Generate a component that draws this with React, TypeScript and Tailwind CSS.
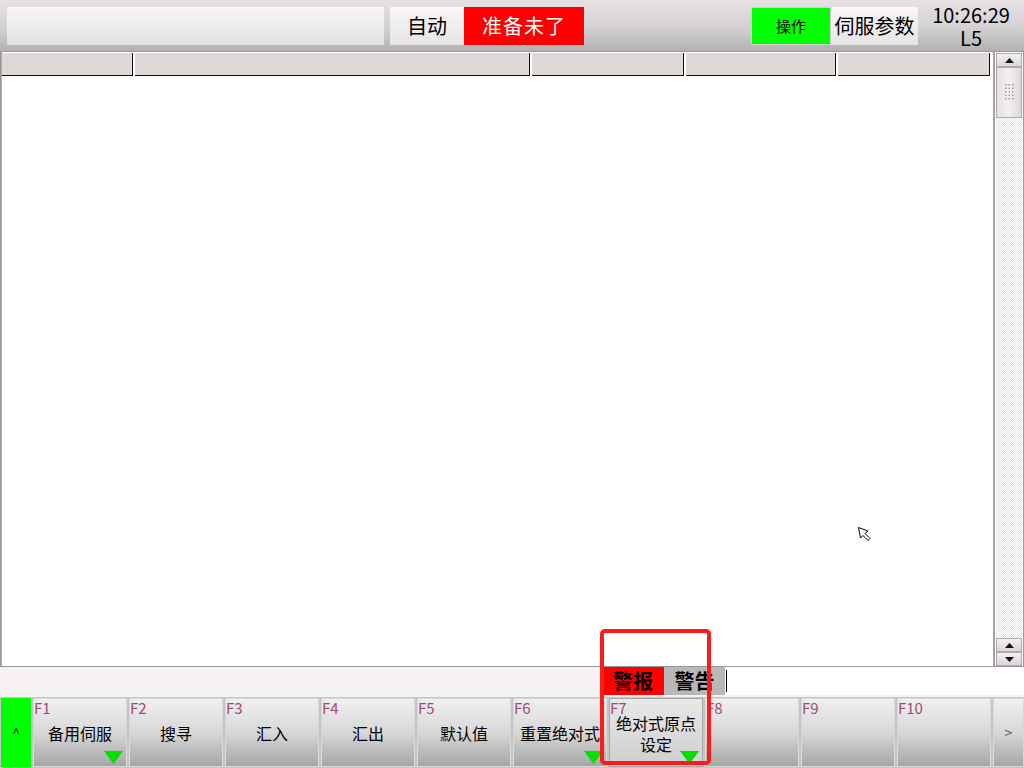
import React from "react";

const FONT = "font-['Noto_Sans_CJK_SC','Noto_Sans',sans-serif]";

type Key = { f: string; label?: string; label2?: string; tri?: boolean; active?: boolean };

const KEYS: Key[] = [
  { f: "F1", label: "备用伺服", tri: true },
  { f: "F2", label: "搜寻" },
  { f: "F3", label: "汇入" },
  { f: "F4", label: "汇出" },
  { f: "F5", label: "默认值" },
  { f: "F6", label: "重置绝对式", tri: true },
  { f: "F7", label: "绝对式原点", label2: "设定", tri: true, active: true },
  { f: "F8" },
  { f: "F9" },
  { f: "F10" },
];

// header column widths (px), separated by a 2px gap showing the divider
const COLS = [131, 395, 152, 150, 152];

function Triangle() {
  return (
    <svg width="19" height="13" viewBox="0 0 19 13" className="absolute bottom-[2px] right-[3px]">
      <polygon points="0,0 19,0 9.5,13" fill="#00e000" />
    </svg>
  );
}

function FKey({ k }: { k: Key }) {
  return (
    <div
      className={`relative flex w-[94px] flex-col border ${
        k.active
          ? "border-[#a8a8a8] bg-gradient-to-b from-[#e8e8e8] to-[#cfcfcf]"
          : "border-[#d8d8d8] bg-gradient-to-b from-[#f0f0f0] via-[#d8d8d8] to-[#a6a6a6]"
      }`}
    >
      <span className="absolute left-[0px] top-[0px] text-[15px] leading-[18px] text-[#a04a72]">{k.f}</span>
      {k.label && (
        <div className="flex flex-1 flex-col items-center justify-center pt-[2px] text-[16px] leading-[21px] text-black">
          <span>{k.label}</span>
          {k.label2 && <span>{k.label2}</span>}
        </div>
      )}
      {k.tri && <Triangle />}
    </div>
  );
}

function ScrollBtn({ up }: { up?: boolean }) {
  return (
    <div className="flex h-[14px] items-center justify-center border border-[#b0a8aa] bg-gradient-to-b from-[#f4f0f1] to-[#dcd6d7]">
      <svg width="9" height="5" viewBox="0 0 9 5">
        <polygon points={up ? "0,5 9,5 4.5,0" : "0,0 9,0 4.5,5"} fill="#111" />
      </svg>
    </div>
  );
}

function Arrow() {
  return (
    <svg width="18" height="18" viewBox="0 0 18 18" className="absolute left-[857px] top-[526px]">
      <path d="M1.5 1.5 L3.5 12 L6 9.5 L11 14.5 L13 12.5 L8 7.5 L11 5 Z" fill="#fff" stroke="#000" strokeWidth="1" />
    </svg>
  );
}

export default function App() {
  return (
    <div className={`relative flex h-[768px] w-[1024px] flex-col overflow-hidden bg-[#c6c6c6] ${FONT}`}>
      {/* top status bar */}
      <div className="flex h-[51px] items-start bg-gradient-to-b from-[#e6e1e3] via-[#d6d3d4] to-[#b2b2b2] pl-[7px] pt-[7px]">
        <div className="h-[38px] w-[377px] bg-gradient-to-b from-[#f8f6f7] to-[#e3e1e2]" />
        <div className="ml-[6px] flex h-[38px] w-[74px] items-center justify-center bg-gradient-to-b from-[#f8f6f7] to-[#e6e4e5] text-[20px] text-black">
          自动
        </div>
        <div className="flex h-[38px] w-[120px] items-center justify-center bg-[#ff0000] text-[20px] tracking-[1px] text-white">
          准备未了
        </div>
        <div className="flex-1" />
        <div className="flex h-[38px] w-[80px] items-center justify-center border border-[#d0d0d0] bg-[#00ff00] text-[15px] text-black">
          操作
        </div>
        <div className="flex h-[38px] w-[87px] items-center justify-center bg-gradient-to-b from-[#f8f6f7] to-[#e6e4e5] text-[20px] text-black">
          伺服参数
        </div>
        <div className="-mt-[7px] flex w-[106px] flex-col items-center pt-[3px] text-[20px] text-black">
          <span className="leading-[23px]">10:26:29</span>
          <span className="leading-[23px]">L5</span>
        </div>
      </div>

      {/* main table panel */}
      <div className="flex h-[616px] border border-[#9c9698] bg-white">
        <div className="flex flex-1 flex-col border-l border-[#b0aaab]">
          <div className="flex h-[24px] gap-[2px] bg-white pt-[1px]">
            {COLS.map((w, i) => (
              <div
                key={i}
                style={{ width: w }}
                className="h-[23px] border-b border-r border-[#111] bg-[#ded8d7]"
              />
            ))}
          </div>
          <div className="flex-1 bg-white" />
        </div>
        <div className="flex w-[30px] flex-col border-l-2 border-[#a8a2a4] bg-white px-[1px] pt-[1px]">
          <ScrollBtn up />
          <div className="flex h-[51px] items-center justify-center border border-[#b0a8aa] bg-gradient-to-r from-[#e6e0e1] via-[#f4f0f1] to-[#dcd6d7]">
            <svg width="9" height="17" viewBox="0 0 9 17">
              {[0, 1, 2, 3, 4].map((r) =>
                [0, 1, 2].map((c) => <rect key={`${r}-${c}`} x={c * 3.5} y={r * 3.5} width="1.5" height="1.5" fill="#9a9a9a" />)
              )}
            </svg>
          </div>
          <div className="flex-1 bg-[repeating-conic-gradient(#e4e4e4_0%_25%,#ffffff_0%_50%)] bg-[length:2px_2px]" />
          <ScrollBtn up />
          <ScrollBtn />
        </div>
      </div>

      {/* alarm tab strip */}
      <div className="flex h-[30px] bg-[#f6f2f4]">
        <div className="w-[602px]" />
        <div className="flex h-[28px] w-[62px] items-center justify-center bg-[#ff0000] text-[20px] font-bold text-black">
          警报
        </div>
        <div className="flex h-[28px] w-[61px] items-center justify-center bg-[#b8b8b8] text-[20px] font-bold text-black">
          警告
        </div>
        <div className="flex h-[28px] flex-1 items-center bg-white pl-[1px]">
          <div className="h-[22px] w-[1px] bg-black" />
        </div>
      </div>

      {/* function key bar */}
      <div className="flex flex-1 gap-[2px] bg-[#c6c6c6] py-[1px] pl-[1px]">
        <div className="flex w-[30px] items-center justify-center bg-[#00ff00] text-[13px] text-black">^</div>
        {KEYS.map((k) => (
          <FKey key={k.f} k={k} />
        ))}
        <div className="flex w-[31px] items-center justify-center border border-[#d8d8d8] bg-gradient-to-b from-[#f0f0f0] via-[#d8d8d8] to-[#a6a6a6] text-[14px] text-[#555]">
          &gt;
        </div>
      </div>

      {/* highlight overlay */}
      <div className="absolute left-[600px] top-[629px] h-[136px] w-[111px] rounded-[5px] border-[4px] border-[#ff1a1a]" />
      <Arrow />
    </div>
  );
}
